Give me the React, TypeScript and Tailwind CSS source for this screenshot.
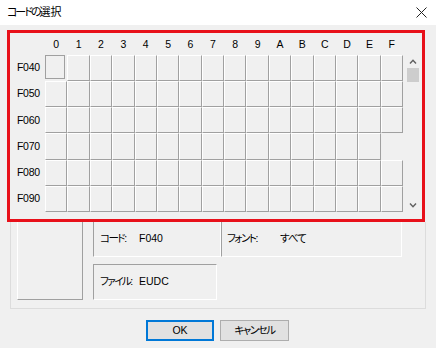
import React from 'react';

const hex = ['0', '1', '2', '3', '4', '5', '6', '7', '8', '9', 'A', 'B', 'C', 'D', 'E', 'F'];
const rows = ['F040', 'F050', 'F060', 'F070', 'F080', 'F090'];

function Chevron({ up }: { up?: boolean }) {
  return (
    <svg width="8" height="5" viewBox="0 0 8 5">
      <polyline
        points={up ? '1,4.5 4,1.2 7,4.5' : '1,0.5 4,3.8 7,0.5'}
        fill="none"
        stroke="#606060"
        strokeWidth="1.4"
      />
    </svg>
  );
}

function Cell({ selected, empty }: { selected?: boolean; empty?: boolean }) {
  if (empty) return <div />;
  if (selected) {
    return (
      <div className="pr-[2px] pb-[2px]">
        <div className="h-full border border-[#a0a0a0]" />
      </div>
    );
  }
  return <div className="border border-t-white border-l-white border-r-[#a0a0a0] border-b-[#a0a0a0]" />;
}

export default function App() {
  return (
    <div className="w-[436px] h-[348px] bg-[#f0f0f0] flex flex-col text-black text-[10.5px] font-['Liberation_Sans','Noto_Sans_CJK_JP',sans-serif] [font-feature-settings:'palt']">
      {/* Title bar */}
      <div className="h-[25px] bg-white flex items-center justify-between pl-[7px] pr-[9px]">
        <span className="text-[11px]">
          <span className="tracking-[-2px]">コードの</span>
          <span>選択</span>
        </span>
        <svg width="11" height="11" viewBox="0 0 11 11">
          <path d="M0.5 0.5 L10.5 10.5 M10.5 0.5 L0.5 10.5" stroke="#222" strokeWidth="1" />
        </svg>
      </div>

      {/* Character grid (highlighted) */}
      <div className="mt-[5px] ml-[7px] w-[418px] h-[192px] border-[3px] border-[#e8101a] flex">
        <div className="w-[393px] h-[179px] grid grid-cols-[35px_repeat(16,minmax(0,1fr))] grid-rows-[22px_repeat(6,minmax(0,1fr))]">
          <div />
          {hex.map(h => (
            <div key={h} className="flex items-center justify-center pt-[2px]">
              {h}
            </div>
          ))}
          {rows.map((r, ri) => (
            <React.Fragment key={r}>
              <div className="flex items-center pl-[7px] tracking-[-0.3px]">{r}</div>
              {hex.map((h, ci) => (
                <Cell key={h} selected={ri === 0 && ci === 0} empty={ri === 3 && ci === 15} />
              ))}
            </React.Fragment>
          ))}
        </div>
        {/* Scrollbar */}
        <div className="w-[19px] mt-[22px] h-[157px] flex flex-col items-center">
          <div className="h-[13px] flex items-center justify-center">
            <Chevron up />
          </div>
          <div className="w-[12px] h-[14px] bg-[#cdcdcd]" />
          <div className="flex-1" />
          <div className="h-[14px] flex items-center justify-center">
            <Chevron />
          </div>
        </div>
      </div>

      {/* Info panel */}
      <div className="ml-[10px] w-[416px] h-[87px] border-x border-b border-[#dcdcdc] flex pl-[6px]">
        <div className="w-[66px] h-[78px] border-l border-l-white border-r border-r-[#a0a0a0] border-b border-b-[#a0a0a0]" />
        <div className="ml-[10px] flex flex-col">
          <div className="flex h-[35px]">
            <div className="w-[128px] border-l border-l-[#a0a0a0] border-r border-r-white border-b border-b-white flex items-center pl-[6px]">
              <span className="w-[39px] shrink-0 whitespace-nowrap tracking-[-1.5px]">コード:</span>
              <span>F040</span>
            </div>
            <div className="w-[181px] border-l border-l-[#a0a0a0] border-r border-r-white border-b border-b-white flex items-center pl-[5px]">
              <span className="w-[53px] shrink-0 whitespace-nowrap tracking-[-1.5px]">フォント:</span>
              <span className="tracking-[-1px]">すべて</span>
            </div>
          </div>
          <div className="mt-[7px] w-[124px] h-[36px] border-t border-t-[#a0a0a0] border-l border-l-[#a0a0a0] border-r border-r-white border-b border-b-white flex items-center pl-[6px]">
            <span className="w-[39px] shrink-0 whitespace-nowrap tracking-[-1.5px]">ファイル:</span>
            <span>EUDC</span>
          </div>
        </div>
      </div>

      {/* Buttons */}
      <div className="mt-[11px] ml-[146px] flex gap-[6px]">
        <button className="w-[68px] h-[21px] border-2 border-[#0078d7] bg-[#e1e1e1] flex items-center justify-center">
          OK
        </button>
        <button className="w-[69px] h-[21px] border border-[#adadad] bg-[#e1e1e1] flex items-center justify-center tracking-[-1.5px]">
          キャンセル
        </button>
      </div>
    </div>
  );
}
